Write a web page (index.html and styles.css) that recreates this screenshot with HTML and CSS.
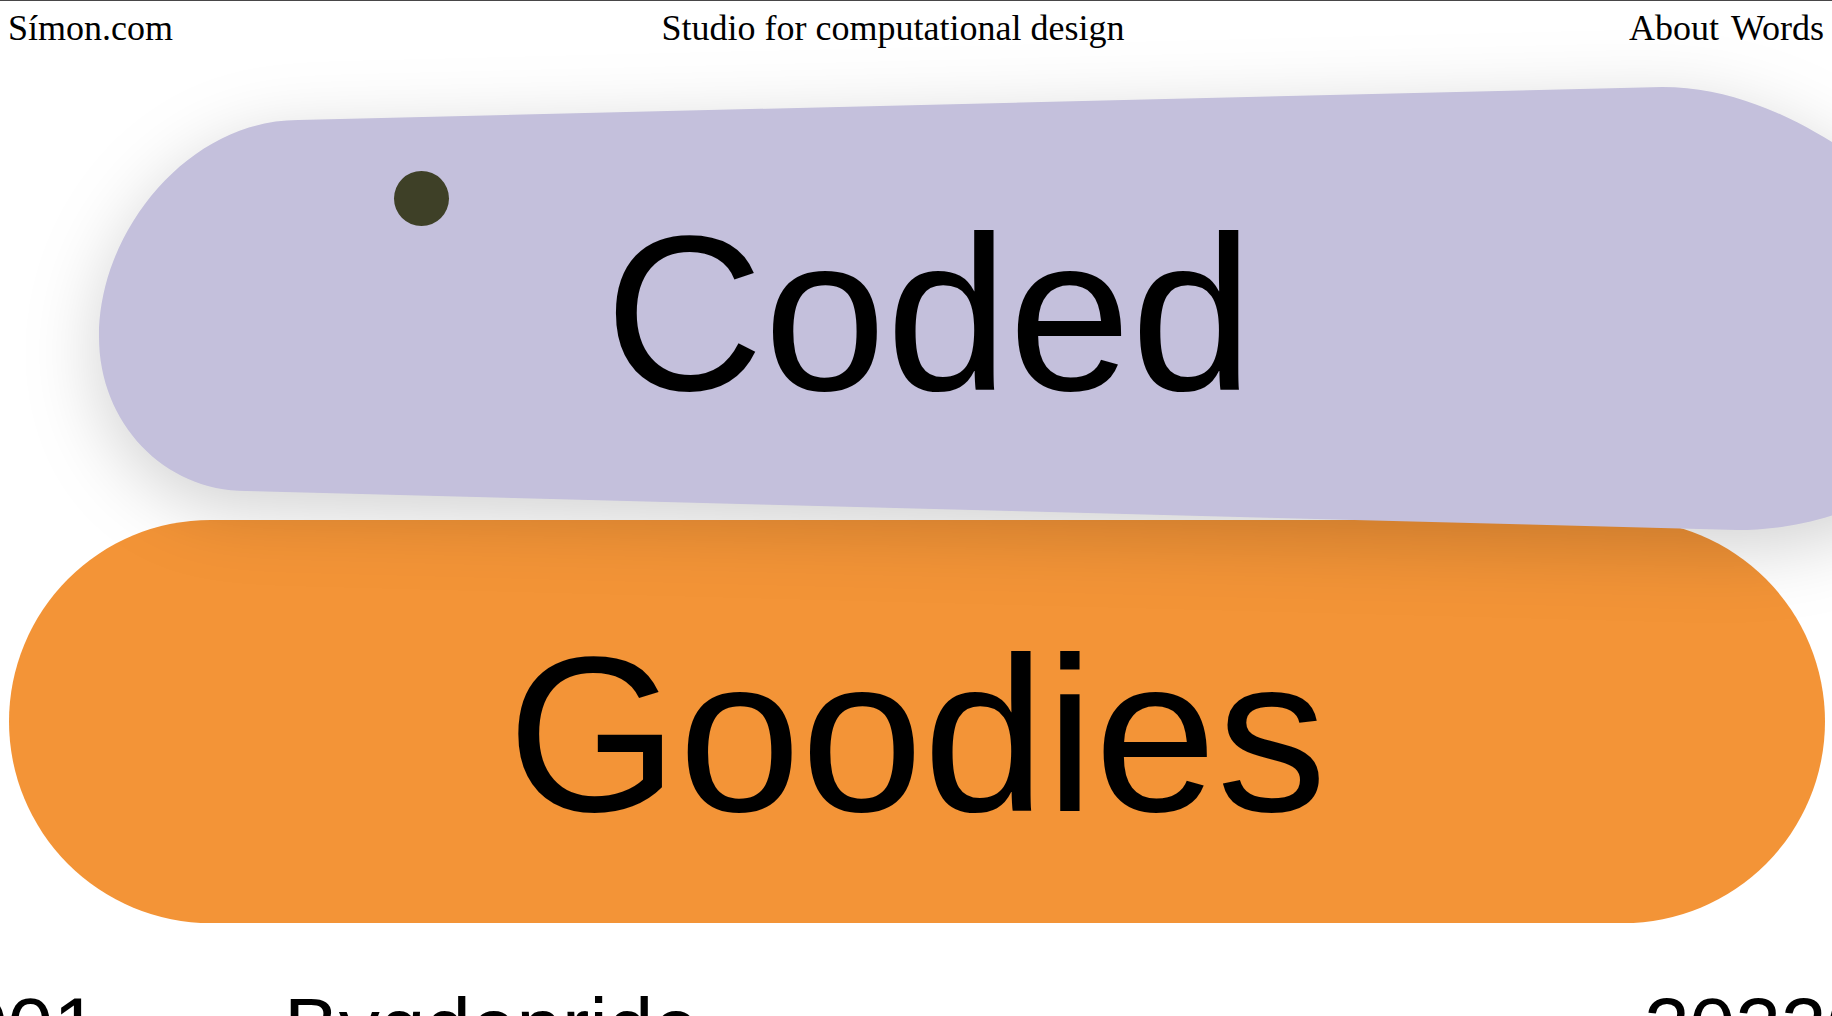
FILE: index.html
```html
<!DOCTYPE html>
<html lang="en">
<head>
<meta charset="utf-8">
<meta name="viewport" content="width=device-width, initial-scale=1">
<title>Símon.com</title>
<link rel="stylesheet" href="styles.css">
</head>
<body>
<header class="site-header">
  <a class="brand" href="#">Símon.com</a>
  <p class="tagline">Studio for computational design</p>
  <nav class="nav"><a href="#about">About</a><a href="#words">Words</a></nav>
</header>
<main class="main">
  <a class="pill pill-coded" href="#coded">
    <svg class="pill-shape" viewBox="0 0 1832 460" preserveAspectRatio="none" aria-hidden="true">
      <path d="M298 71 L1662 38 C1730 38 1788 66 1832 93 C1930 150 1980 230 1980 300 C1980 410 1860 481 1737 481 L246 442 C164 442 99 374 99 288 C99 180 190 71 298 71 Z"/>
    </svg>
    <span class="pill-label">Coded</span>
    <span class="dot"></span>
  </a>
  <a class="pill pill-goodies" href="#goodies"><span class="pill-label">Goodies</span></a>
  <div class="project">
    <span class="project-number">001</span>
    <a class="project-name" href="#bygdepride">Bygdepride</a>
    <span class="project-year">20220</span>
  </div>
</main>
</body>
</html>
```
FILE: styles.css
```css
* {
  box-sizing: border-box;
}

body {
  margin: 0;
  height: 100vh;
  overflow: hidden;
  background: #fff;
  color: #000;
  border-top: 1px solid #484648;
  font-family: "Liberation Sans", Arial, sans-serif;
}

a {
  color: inherit;
  text-decoration: none;
}

.site-header {
  position: relative;
  z-index: 3;
  display: flex;
  justify-content: space-between;
  padding: 7px 8px 1px;
  font: 36px/40px "Liberation Serif", "Times New Roman", serif;
}

.tagline {
  margin: 0 16px 0 0;
}

.nav {
  display: flex;
  gap: 12px;
}

.main {
  display: flex;
  flex-direction: column;
}

.pill {
  display: flex;
  align-items: center;
  justify-content: center;
  font-size: 220px;
  line-height: 240px;
}

.pill-coded {
  position: relative;
  z-index: 2;
  height: 460px;
  padding: 70px 0 0 26px;
}

.pill-shape {
  position: absolute;
  inset: 0;
  width: 100%;
  height: 100%;
  overflow: visible;
  fill: #c4c0dc;
  filter: drop-shadow(0 18px 36px rgb(0 0 0 / 18%));
}

.pill-label {
  position: relative;
}

.dot {
  position: absolute;
  left: 394px;
  top: 122px;
  width: 55px;
  height: 55px;
  border-radius: 50%;
  background: #3e4027;
}

.pill-goodies {
  height: 403px;
  margin: 11px 7px 0 9px;
  padding-top: 26px;
  border-radius: 202px;
  background: #f39437;
}

.project {
  display: grid;
  grid-template-columns: 322px 1fr auto;
  margin: 56px -40px 0 -38px;
  font-size: 82px;
  line-height: 96px;
}
```
